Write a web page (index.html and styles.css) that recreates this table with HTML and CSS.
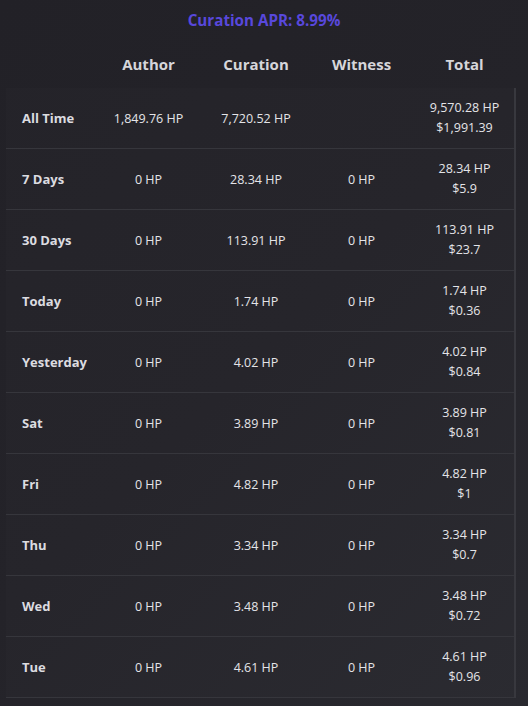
FILE: index.html
```html
<!DOCTYPE html>
<html>
<head>
<meta charset="utf-8">
<link rel="stylesheet" href="styles.css">
</head>
<body>
<div class="page">
  <h1 class="apr">Curation APR: 8.99%</h1>
  <div class="table">
    <div class="row head">
      <div class="cell label"></div>
      <div class="cell">Author</div>
      <div class="cell">Curation</div>
      <div class="cell">Witness</div>
      <div class="cell">Total</div>
    </div>
    <div class="body">
      <div class="row"><div class="cell label">All Time</div><div class="cell">1,849.76 HP</div><div class="cell">7,720.52 HP</div><div class="cell"></div><div class="cell total"><span>9,570.28 HP</span><span>$1,991.39</span></div></div>
      <div class="row"><div class="cell label">7 Days</div><div class="cell">0 HP</div><div class="cell">28.34 HP</div><div class="cell">0 HP</div><div class="cell total"><span>28.34 HP</span><span>$5.9</span></div></div>
      <div class="row"><div class="cell label">30 Days</div><div class="cell">0 HP</div><div class="cell">113.91 HP</div><div class="cell">0 HP</div><div class="cell total"><span>113.91 HP</span><span>$23.7</span></div></div>
      <div class="row"><div class="cell label">Today</div><div class="cell">0 HP</div><div class="cell">1.74 HP</div><div class="cell">0 HP</div><div class="cell total"><span>1.74 HP</span><span>$0.36</span></div></div>
      <div class="row"><div class="cell label">Yesterday</div><div class="cell">0 HP</div><div class="cell">4.02 HP</div><div class="cell">0 HP</div><div class="cell total"><span>4.02 HP</span><span>$0.84</span></div></div>
      <div class="row"><div class="cell label">Sat</div><div class="cell">0 HP</div><div class="cell">3.89 HP</div><div class="cell">0 HP</div><div class="cell total"><span>3.89 HP</span><span>$0.81</span></div></div>
      <div class="row"><div class="cell label">Fri</div><div class="cell">0 HP</div><div class="cell">4.82 HP</div><div class="cell">0 HP</div><div class="cell total"><span>4.82 HP</span><span>$1</span></div></div>
      <div class="row"><div class="cell label">Thu</div><div class="cell">0 HP</div><div class="cell">3.34 HP</div><div class="cell">0 HP</div><div class="cell total"><span>3.34 HP</span><span>$0.7</span></div></div>
      <div class="row"><div class="cell label">Wed</div><div class="cell">0 HP</div><div class="cell">3.48 HP</div><div class="cell">0 HP</div><div class="cell total"><span>3.48 HP</span><span>$0.72</span></div></div>
      <div class="row"><div class="cell label">Tue</div><div class="cell">0 HP</div><div class="cell">4.61 HP</div><div class="cell">0 HP</div><div class="cell total"><span>4.61 HP</span><span>$0.96</span></div></div>
    </div>
  </div>
</div>
</body>
</html>
```
FILE: styles.css
```css
html, body {
  margin: 0;
  padding: 0;
  background: #232228;
  font-family: "Open Sans", "Noto Sans", sans-serif;
  color: #e4e4e8;
}
.page {
  width: 528px;
  height: 706px;
  overflow: hidden;
  background: linear-gradient(135deg, #222127 0%, #242329 50%, #29292f 100%);
}
.apr {
  margin: 0;
  padding-top: 9px;
  height: 23px;
  line-height: 23px;
  text-align: center;
  font-size: 15.2px;
  font-weight: 700;
  color: #5848dc;
}
.table {
  margin: 0 12px 0 6px;
}
.row {
  display: grid;
  grid-template-columns: 89px 107px 108px 103px 103px;
  height: 60px;
  align-items: center;
  border-bottom: 1px solid #36363c;
}
.head {
  height: 56px;
  border-bottom: none;
  font-weight: 700;
  color: #d6d6da;
}
.head .cell {
  padding-top: 8px;
  font-size: 15px;
}
.body {
  border-right: 2px solid #38383e;
  background: rgba(255,255,255,0.012);
}
.cell {
  text-align: center;
  font-size: 12.5px;
}
.label {
  text-align: left;
  padding-left: 16px;
  font-weight: 700;
  font-size: 13px;
  color: #dcdce0;
}
.total {
  display: flex;
  flex-direction: column;
  align-items: center;
  line-height: 20px;
}
```
